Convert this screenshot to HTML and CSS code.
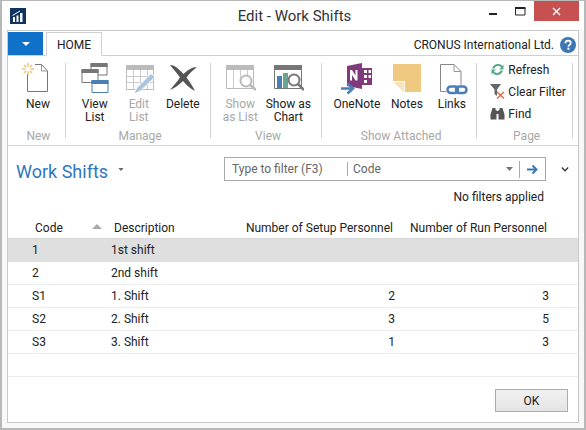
FILE: index.html
```html
<!DOCTYPE html>
<html lang="en">
<head>
<meta charset="utf-8">
<title>Edit - Work Shifts</title>
<link rel="stylesheet" href="styles.css">
</head>
<body>
<div class="window">
  <header class="titlebar">
    <svg class="app-icon" width="16" height="16" viewBox="0 0 16 16"><rect width="16" height="16" fill="#0f3460"/><path d="M3 9h2v5H3zM6.500 7.500h2V14h-2zM10 5h2.500v9H10z" fill="#fff"/><path d="M2.500 7.500 10 3" stroke="#fff" fill="none"/></svg>
    <h1 class="title">Edit - Work Shifts</h1>
    <div class="controls">
      <span class="ctl"><svg width="9" height="9" viewBox="0 0 9 9"><rect y="6" width="8" height="2" fill="#222"/></svg></span>
      <span class="ctl"><svg width="11" height="9" viewBox="0 0 11 9"><path d="M.5 1h9.500v7H.5z" fill="none" stroke="#222"/><rect x="0" y="0" width="10.500" height="2" fill="#222"/></svg></span>
      <span class="close"><svg width="9" height="9" viewBox="0 0 9 9"><path d="M1 1l7 7M8 1L1 8" stroke="#fff" stroke-width="1.400"/></svg></span>
    </div>
  </header>
  <div class="frame">
    <div class="tabrow">
      <span class="file"><svg width="8" height="4" viewBox="0 0 8 4"><path d="M0 0h8L4 4z" fill="#fff"/></svg></span>
      <span class="tab">HOME</span>
      <span class="company">CRONUS International Ltd.</span>
      <svg class="help" width="16" height="16" viewBox="0 0 16 16"><circle cx="8" cy="8" r="8" fill="#3d77b2"/><path d="M5.400 6.200C5.500 4.600 6.600 3.700 8.100 3.700c1.600 0 2.600.9 2.600 2.200 0 2-2.300 2-2.300 3.800" fill="none" stroke="#fff" stroke-width="1.800"/><rect x="7.400" y="10.700" width="2" height="2" fill="#fff"/></svg>
    </div>
    <div class="ribbon">
      <section class="group g-new">
        <div class="items">
          <div class="big">
            <svg class="ico" width="32" height="32" viewBox="0 0 32 32"><path d="M5.500 11V28.500H25.500V8L19.500 1.500H13" fill="#fff" stroke="#777"/><path d="M19.500 1.500V8H25.500" fill="none" stroke="#999"/><g stroke="#efc573" stroke-width="1.500"><path d="M6 0v12M0 6h12M2 2l8 8M10 2l-8 8"/></g><circle cx="6" cy="6" r="2.500" fill="#fff"/></svg>
            <span>New</span>
          </div>
        </div>
        <div class="glabel">New</div>
      </section>
      <section class="group g-manage">
        <div class="items">
          <div class="big">
            <svg class="ico" width="32" height="32" viewBox="-2.500 0 32 32"><g fill="#fff" stroke="#777"><path d="M9.500 .5h16V12h-16z"/><path d="M.5 6.500h16v13H.5z"/></g><rect x="9" y="0" width="17" height="4" fill="#777"/><rect y="6" width="17" height="4" fill="#777"/><path d="M10.500 17.500h16v12h-16z" fill="#fff" stroke="#4a7fb5"/><rect x="10" y="17" width="17" height="4" fill="#4a7fb5"/></svg>
            <span>View<br>List</span>
          </div>
          <div class="big off">
            <svg class="ico" width="32" height="32" viewBox="-3 0 32 32"><path d="M.5 2.500h27v24H.5z" fill="#fff" stroke="#bbb"/><rect y="2" width="28" height="5" fill="#bbb"/><path d="M7.500 7v19M14.500 7v19M21.500 7v19M0 13.500h28M0 19.500h28" stroke="#ccc"/><path d="M8 31l2.500-6L25 10.500l4 3.500L14 28.500z" fill="#a9c5e0" stroke="#fff"/></svg>
            <span>Edit<br>List</span>
          </div>
          <div class="big">
            <svg class="ico" width="32" height="32" viewBox="0 1 32 32"><path d="M3 3C8 3 13 8 16.500 12 20 8.500 25 5 30 5 26 8 22 12 19.500 15.500 23 20 26 25 28 29 24 27 19 23 16 19 12 23 8 26 3 28 6 24 10 20 13 15.500 10 11 6 7 3 3z" fill="#555"/></svg>
            <span>Delete</span>
          </div>
        </div>
        <div class="glabel">Manage</div>
      </section>
      <section class="group g-view">
        <div class="items">
          <div class="big off">
            <svg class="ico" width="32" height="32" viewBox="-2 3 32 32"><path d="M.5 5.500h27v23H.5z" fill="#fff" stroke="#bbb"/><rect y="5" width="28" height="5" fill="#bbb"/><path d="M7.500 10v18M14.500 10v8M21.500 10v8" stroke="#ccc"/><circle cx="20" cy="21" r="5.500" fill="#fff" stroke="#bbb" stroke-width="2"/><path d="M24 25l6 5" stroke="#bbb" stroke-width="2.500"/></svg>
            <span>Show<br>as List</span>
          </div>
          <div class="big">
            <svg class="ico" width="32" height="32" viewBox="-2 3 32 32"><path d="M.5 5.500h27v23H.5z" fill="#fff" stroke="#777"/><rect y="5" width="28" height="5" fill="#777"/><rect x="3" y="16" width="5" height="12" fill="#4a7fb5"/><rect x="9" y="13" width="5" height="15" fill="#6aa58f"/><circle cx="20" cy="20" r="5.500" fill="#fff" stroke="#777" stroke-width="2"/><path d="M24 24l6 6" stroke="#777" stroke-width="2.500"/></svg>
            <span>Show as<br>Chart</span>
          </div>
        </div>
        <div class="glabel">View</div>
      </section>
      <section class="group g-attached">
        <div class="items">
          <div class="big">
            <svg class="ico" width="32" height="32" viewBox="0 0 32 32"><path d="M6 3l15-3v26l-15-3z" fill="#80397b"/><path d="M21 5h10v17H21z" fill="#80397b"/><g fill="#fff"><path d="M23 7h3v3h-3zM27.500 7H30v3h-2.500zM23 12h3v3h-3zM27.500 12H30v3h-2.500zM23 17h3v3h-3z"/><path d="M9 7h2l3.500 5.500V7h2v10.500h-2L11 12v5.500H9z"/></g><path d="M0 25.500h10" stroke="#4a7fb5" stroke-width="2.500"/><path d="M6.500 20.500l5.500 5-5.500 5" fill="none" stroke="#4a7fb5" stroke-width="2.500"/></svg>
            <span>OneNote</span>
          </div>
          <div class="big notes">
            <svg class="ico" width="28" height="32" viewBox="0 -1 28 32"><path d="M0 0h28v28H11L0 17z" fill="#efc97f"/><path d="M0 17h11v11z" fill="#f7e4bd"/><path d="M0 17.500h11.500V28" fill="none" stroke="#fff"/></svg>
            <span>Notes</span>
          </div>
          <div class="big links">
            <svg class="ico" width="32" height="32" viewBox="0 0 32 32"><path d="M10 28.500H4.500V1.500H18L25 8.500V22" fill="#fff" stroke="#888"/><path d="M18 1.500v7h7" fill="none" stroke="#999"/><g fill="none" stroke="#4a7fb5" stroke-width="2.500"><rect x="11.500" y="23.500" width="10.500" height="6.500" rx="3.200"/><rect x="20" y="23.500" width="10.500" height="6.500" rx="3.200"/></g></svg>
            <span>Links</span>
          </div>
        </div>
        <div class="glabel">Show Attached</div>
      </section>
      <section class="group g-page">
        <div class="small-list">
          <div class="small">
            <svg width="15" height="15" viewBox="0 0 15 15"><path d="M2 6.500C3 3 6 1.500 9 2c1.500.3 2.500 1 3 2l1.500-1.500V7.500H9L11 5.500C9.500 3.500 5.500 3.500 4.500 6.500z" fill="#58a98a"/><path d="M13 8.500C12 12 9 13.500 6 13c-1.500-.3-2.500-1-3-2l-1.500 1.500V7.500H6L4 9.500C5.500 11.500 9.500 11.500 10.500 8.500z" fill="#58a98a"/></svg>
            <span>Refresh</span>
          </div>
          <div class="small">
            <svg width="15" height="15" viewBox="0 0 15 15"><path d="M0 0h11L7 5.500V12L4.500 10V5.500z" fill="#666"/><path d="M7 8l7 6.500M14 8l-7 6.500" stroke="#e0603c" stroke-width="1.300"/></svg>
            <span>Clear Filter</span>
          </div>
          <div class="small">
            <svg width="15" height="15" viewBox="0 0 15 15"><path d="M2.500 2h3v2H6.500v9.500H.5v-5zM9.500 2h3l2 6.500v5h-6V4h1zM6.500 5h2v3h-2z" fill="#555"/></svg>
            <span>Find</span>
          </div>
        </div>
        <div class="glabel">Page</div>
      </section>
    </div>
    <main class="content">
      <div class="headline">
        <h2 class="page-title">Work Shifts</h2>
        <svg class="caret" width="6" height="3" viewBox="0 0 7 4"><path d="M0 0h7L3.500 4z" fill="#666"/></svg>
        <div class="filterbox">
          <span class="f-type">Type to filter (F3)</span>
          <span class="f-code">Code</span>
          <svg class="f-drop" width="7" height="4" viewBox="0 0 7 4"><path d="M0 0h7L3.500 4z" fill="#777"/></svg>
          <span class="f-go"><svg width="11" height="9" viewBox="0 0 11 9"><path d="M0 4.500h9" stroke="#3d77b2" stroke-width="2"/><path d="M5.500.5l4 4-4 4" fill="none" stroke="#3d77b2" stroke-width="2"/></svg></span>
        </div>
        <svg class="collapse" width="8" height="5" viewBox="0 0 9 6"><path d="M.7.700l3.800 3.800L8.300.7" fill="none" stroke="#333" stroke-width="1.600"/></svg>
      </div>
      <div class="nofilter">No filters applied</div>
      <div class="grid">
        <div class="row head">
          <span class="c-code">Code<svg class="sort" width="10" height="5" viewBox="0 0 10 5"><path d="M0 5h10L5 0z" fill="#aaa"/></svg></span>
          <span class="c-desc">Description</span>
          <span class="c-num">Number of Setup Personnel</span>
          <span class="c-run">Number of Run Personnel</span>
        </div>
        <div class="row sel"><span class="c-code">1</span><span class="c-desc">1st shift</span><span class="c-num"></span><span class="c-run"></span></div>
        <div class="row"><span class="c-code">2</span><span class="c-desc">2nd shift</span><span class="c-num"></span><span class="c-run"></span></div>
        <div class="row"><span class="c-code">S1</span><span class="c-desc">1. Shift</span><span class="c-num">2</span><span class="c-run">3</span></div>
        <div class="row"><span class="c-code">S2</span><span class="c-desc">2. Shift</span><span class="c-num">3</span><span class="c-run">5</span></div>
        <div class="row"><span class="c-code">S3</span><span class="c-desc">3. Shift</span><span class="c-num">1</span><span class="c-run">3</span></div>
        <div class="row"><span class="c-code"></span><span class="c-desc"></span><span class="c-num"></span><span class="c-run"></span></div>
      </div>
      <div class="footer"><button class="ok" type="button">OK</button></div>
    </main>
  </div>
</div>
</body>
</html>
```

FILE: styles.css
```css
* { box-sizing: border-box; }
html, body { margin: 0; padding: 0; }
body {
  width: 586px;
  height: 430px;
  overflow: hidden;
  font-family: Roboto, "Open Sans", sans-serif;
  font-size: 12px;
  color: #222;
  background: #fff;
}
.window {
  width: 586px;
  height: 430px;
  border: 1px solid #b8b8b8;
  border-width: 1px 2px 2px 2px;
  background: #f8f8f8;
  padding: 0 5px 5px;
  display: flex;
  flex-direction: column;
}
.titlebar {
  height: 29px;
  flex: none;
  display: grid;
  grid-template-columns: 1fr auto 1fr;
  align-items: center;
  background: #fff;
  margin: 0 -5px;
  padding: 0 5px 0 8px;
}
.app-icon { display: block; }
.title {
  margin: 0;
  font-size: 15px;
  font-weight: 400;
  color: #333;
}
.controls {
  justify-self: end;
  align-self: start;
  display: flex;
  align-items: center;
  height: 20px;
}
.ctl { width: 27px; display: flex; justify-content: center; }
.close {
  width: 45px;
  height: 20px;
  background: #c75050;
  display: flex;
  align-items: center;
  justify-content: center;
}
.frame {
  flex: 1;
  min-height: 0;
  display: flex;
  flex-direction: column;
  border: 1px solid #c8c8c8;
  background: #fff;
}
.tabrow {
  height: 25px;
  flex: none;
  display: flex;
  align-items: flex-end;
  background: #fff;
  border-bottom: 1px solid #d0d0d0;
  padding-right: 2px;
}
.file {
  width: 35px;
  height: 23px;
  background: #1071c9;
  display: flex;
  align-items: center;
  justify-content: center;
  align-self: flex-start;
  margin-top: 1px;
}
.tab {
  width: 56px;
  height: 24px;
  margin-left: 3px;
  margin-bottom: -1px;
  padding-top: 2px;
  border: 1px solid #d0d0d0;
  border-bottom: 1px solid #fff;
  background: #fff;
  display: flex;
  align-items: center;
  justify-content: center;
  font-size: 12px;
  color: #222;
}
.company { margin-left: auto; margin-right: 6px; margin-top: 4px; align-self: center; }
.help { align-self: center; margin-top: 4px; }
.ribbon {
  height: 90px;
  flex: none;
  display: flex;
  border-bottom: 1px solid #d4d4d4;
  background: #fff;
  padding: 7px 5px 0 0;
}
.group {
  display: flex;
  flex-direction: column;
  border-right: 1px solid #d4d4d4;
  height: 75px;
}
.g-new { width: 58px; }
.g-manage { width: 146px; }
.g-view { width: 111px; }
.g-attached { width: 156px; }
.g-page { width: 96px; }
.items { display: flex; flex: 1; }
.g-new .items { padding-left: 8px; }
.g-manage .items { padding-left: 7px; }
.g-view .items { padding-left: 7px; gap: 4px; }
.g-attached .items { padding-left: 13px; gap: 3px; }
.notes { margin: 0 -3px 0 3px; }
.links { margin-left: 1px; }
.big {
  width: 44px;
  display: flex;
  flex-direction: column;
  align-items: center;
  text-align: center;
  line-height: 13px;
  white-space: nowrap;
}
.big .ico { height: 32px; margin-bottom: 3px; }
.off { color: #a8a8a8; }
.glabel {
  height: 14px;
  margin-bottom: -5px;
  padding-left: 4px;
  text-align: center;
  color: #a8a8a8;
  line-height: 14px;
}
.small-list { flex: 1; display: flex; flex-direction: column; gap: 7px; padding-left: 13px; margin-top: -1px; }
.small { display: flex; align-items: center; gap: 3px; height: 15px; white-space: nowrap; }
.content { flex: 1; min-height: 0; display: flex; flex-direction: column; background: #fff; }
.headline { height: 24px; flex: none; margin-top: 11px; display: flex; align-items: center; padding: 0 9px 0 8px; }
.page-title { margin: 5px 0 0; font-size: 18px; font-weight: 400; color: #2f77bd; }
.caret { margin-left: 10px; }
.filterbox {
  width: 322px;
  height: 24px;
  margin-left: auto;
  border: 1px solid #a9a9a9;
  display: flex;
  align-items: center;
  color: #666;
}
.f-type { width: 123px; padding-left: 7px; border-right: 1px solid #a9a9a9; white-space: nowrap; }
.f-code { flex: 1; padding-left: 5px; }
.f-drop { margin-right: 6px; }
.f-go { width: 26px; height: 17px; border-left: 1px solid #a9a9a9; display: flex; align-items: center; justify-content: center; }
.collapse { margin-left: 15px; }
.nofilter { text-align: right; padding-right: 34px; margin-top: 8px; height: 17px; line-height: 17px; }
.grid { margin-top: 9px; }
.row {
  display: grid;
  grid-template-columns: 103px 95px 189px 1fr;
  height: 23px;
  align-items: center;
  border-bottom: 1px solid #ececec;
}
.row.head { height: 24px; padding-top: 3px; border-bottom: 1px solid #d8d8d8; }
.row.sel { background: #dfdfdf; border-bottom-color: #dfdfdf; }
.c-code { padding-left: 24px; position: relative; display: flex; align-items: center; }
.c-desc { white-space: nowrap; }
.c-num { text-align: right; white-space: nowrap; }
.c-run { text-align: right; padding-right: 29px; white-space: nowrap; }
.head .c-code { padding-left: 27px; }
.head .c-desc { padding-left: 3px; }
.head .c-num { padding-right: 2px; }
.head .c-run { padding-right: 31px; }
.sort { position: absolute; left: 84px; top: 3px; }
.footer { display: flex; justify-content: flex-end; padding: 12px 10px 0 0; }
.ok {
  width: 73px;
  height: 23px;
  border: 1px solid #acacac;
  background: linear-gradient(#f1f1f1, #e4e4e4);
  font: inherit;
  color: #222;
  padding: 0;
}
```
